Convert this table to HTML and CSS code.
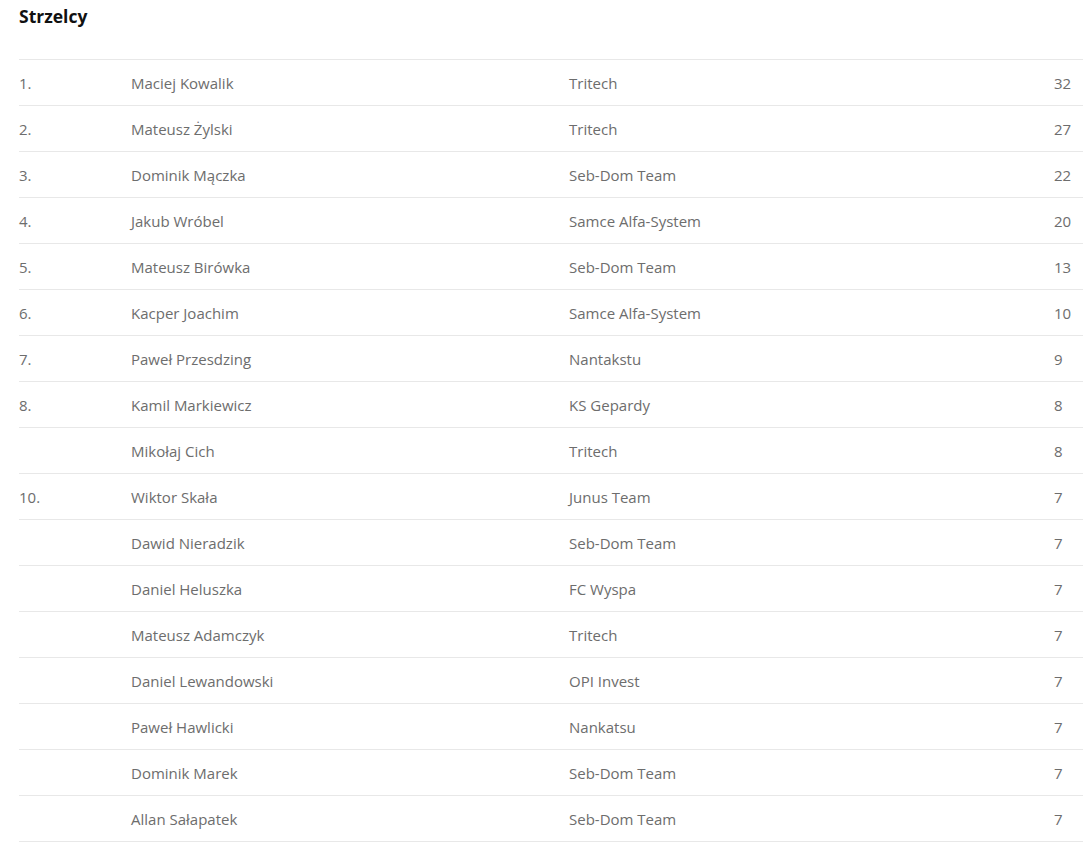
FILE: index.html
```html
<!DOCTYPE html>
<html lang="pl">
<head>
<meta charset="utf-8">
<title>Strzelcy</title>
<link rel="stylesheet" href="styles.css">
</head>
<body>
<div class="page">
  <h2 class="title">Strzelcy</h2>
  <div class="table">
    <div class="row"><span>1.</span><span>Maciej Kowalik</span><span>Tritech</span><span>32</span></div>
    <div class="row"><span>2.</span><span>Mateusz Żylski</span><span>Tritech</span><span>27</span></div>
    <div class="row"><span>3.</span><span>Dominik Mączka</span><span>Seb-Dom Team</span><span>22</span></div>
    <div class="row"><span>4.</span><span>Jakub Wróbel</span><span>Samce Alfa-System</span><span>20</span></div>
    <div class="row"><span>5.</span><span>Mateusz Birówka</span><span>Seb-Dom Team</span><span>13</span></div>
    <div class="row"><span>6.</span><span>Kacper Joachim</span><span>Samce Alfa-System</span><span>10</span></div>
    <div class="row"><span>7.</span><span>Paweł Przesdzing</span><span>Nantakstu</span><span>9</span></div>
    <div class="row"><span>8.</span><span>Kamil Markiewicz</span><span>KS Gepardy</span><span>8</span></div>
    <div class="row"><span></span><span>Mikołaj Cich</span><span>Tritech</span><span>8</span></div>
    <div class="row"><span>10.</span><span>Wiktor Skała</span><span>Junus Team</span><span>7</span></div>
    <div class="row"><span></span><span>Dawid Nieradzik</span><span>Seb-Dom Team</span><span>7</span></div>
    <div class="row"><span></span><span>Daniel Heluszka</span><span>FC Wyspa</span><span>7</span></div>
    <div class="row"><span></span><span>Mateusz Adamczyk</span><span>Tritech</span><span>7</span></div>
    <div class="row"><span></span><span>Daniel Lewandowski</span><span>OPI Invest</span><span>7</span></div>
    <div class="row"><span></span><span>Paweł Hawlicki</span><span>Nankatsu</span><span>7</span></div>
    <div class="row"><span></span><span>Dominik Marek</span><span>Seb-Dom Team</span><span>7</span></div>
    <div class="row"><span></span><span>Allan Sałapatek</span><span>Seb-Dom Team</span><span>7</span></div>
  </div>
</div>
</body>
</html>
```

FILE: styles.css
```css
html, body {
  margin: 0;
  padding: 0;
  background: #ffffff;
}
body {
  font-family: "Open Sans", "Liberation Sans", sans-serif;
}
.page {
  padding: 2px 0 0 19px;
}
.title {
  margin: 0;
  font-size: 17.5px;
  font-weight: 700;
  color: #111111;
  line-height: 28px;
  height: 57px;
}
.table {
  width: 1064px;
  border-bottom: 1px solid #e8e8e8;
}
.row {
  display: grid;
  grid-template-columns: 112px 438px 485px 1fr;
  height: 46px;
  box-sizing: border-box;
  padding-top: 1px;
  border-top: 1px solid #e8e8e8;
  align-items: center;
  font-size: 15px;
  line-height: 22px;
  color: #6d6d6d;
}
```
